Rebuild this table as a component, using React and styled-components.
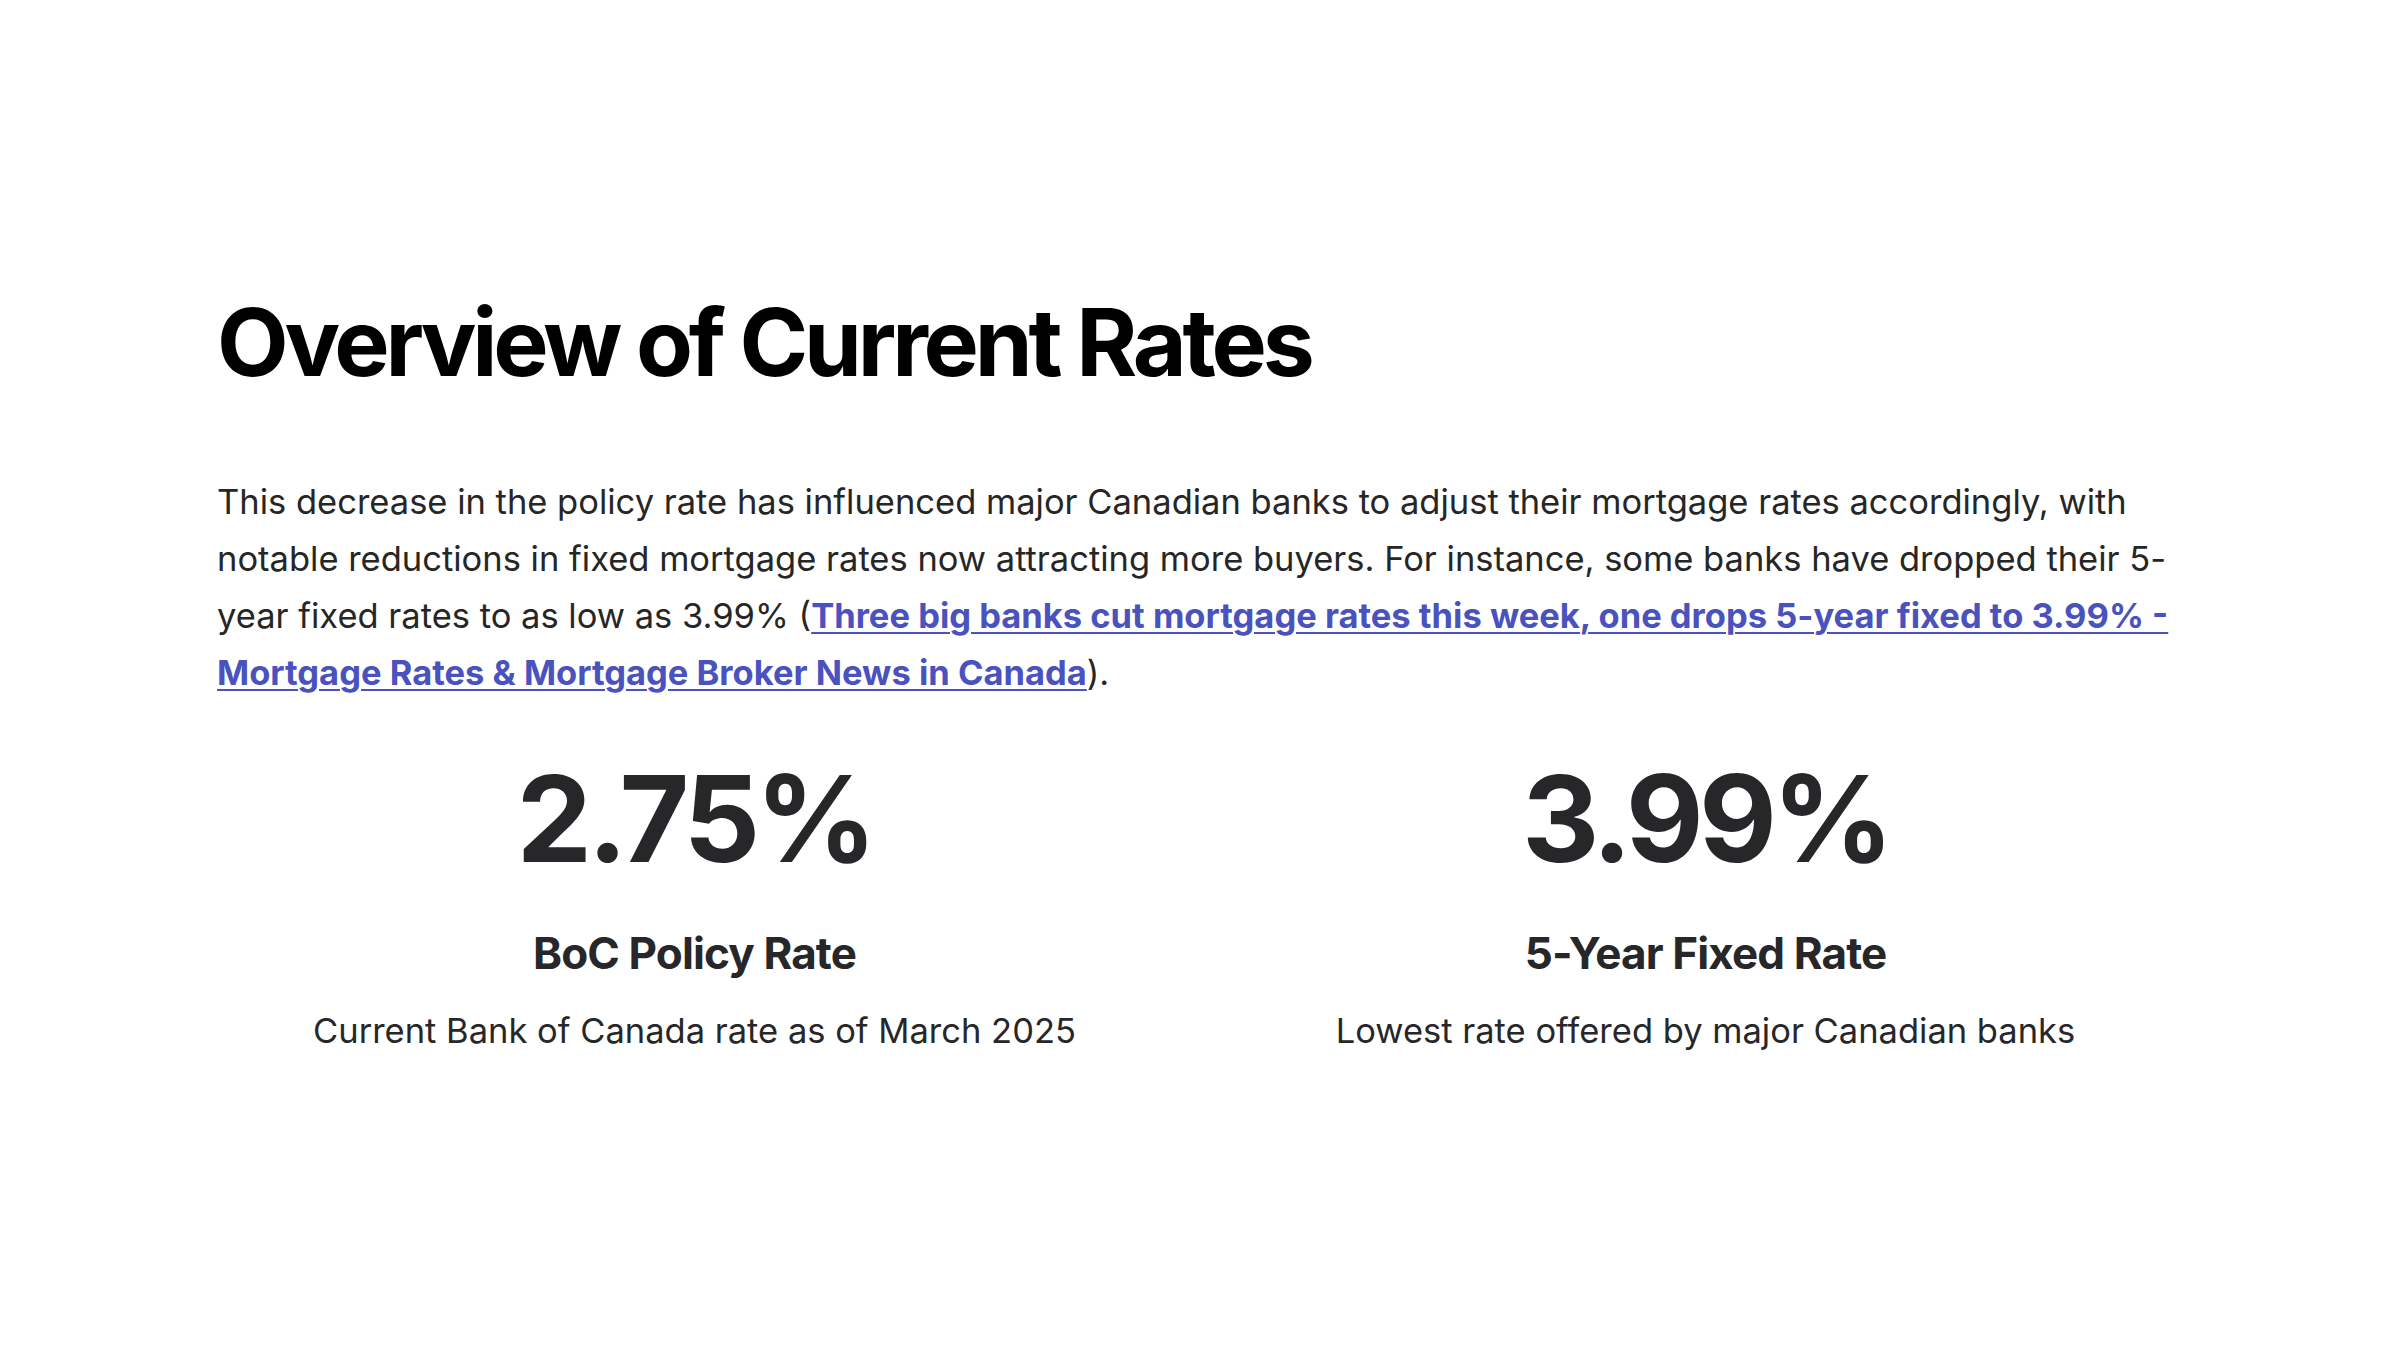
import React from "react";
import styled, { createGlobalStyle } from "styled-components";

const GlobalStyle = createGlobalStyle`
  html, body {
    margin: 0;
    padding: 0;
    background: #ffffff;
  }
  body {
    font-family: Inter, "Noto Sans", "Liberation Sans", sans-serif;
    -webkit-font-smoothing: antialiased;
  }
`;

const Page = styled.main`
  box-sizing: border-box;
  width: 2400px;
  height: 1350px;
  padding: 287px 217px 0;
  display: flex;
  flex-direction: column;
`;

const Title = styled.h1`
  margin: 0;
  font-size: 93px;
  line-height: 1.2;
  font-weight: 700;
  letter-spacing: -0.045em;
  color: #000;
`;

const Body = styled.p`
  margin: 74px 0 0;
  font-size: 34.5px;
  line-height: 57px;
  font-weight: 400;
  color: #262626;
`;

const Link = styled.a`
  color: #4a52be;
  font-weight: 650;
  text-decoration: underline;
  text-underline-offset: 4px;
  text-decoration-thickness: 2px;
`;

const Stats = styled.section`
  margin-top: 58px;
  display: grid;
  grid-template-columns: 1fr 1fr;
  column-gap: 56px;
`;

const Stat = styled.div`
  display: flex;
  flex-direction: column;
  align-items: center;
  text-align: center;
`;

const Value = styled.div`
  font-size: 120px;
  line-height: 120px;
  font-weight: 700;
  letter-spacing: -0.04em;
  color: #27272a;
`;

const Label = styled.h3`
  margin: 46px 0 0;
  font-size: 44px;
  line-height: 57px;
  font-weight: 700;
  letter-spacing: -0.02em;
  color: #27272a;
`;

const Caption = styled.p`
  margin: 25px 0 0;
  font-size: 34.5px;
  line-height: 48px;
  color: #27272a;
`;

const stats = [
  { value: "2.75%", label: "BoC Policy Rate", caption: "Current Bank of Canada rate as of March 2025" },
  { value: "3.99%", label: "5-Year Fixed Rate", caption: "Lowest rate offered by major Canadian banks" },
];

export default function App() {
  return (
    <>
      <GlobalStyle />
      <Page>
        <Title>Overview of Current Rates</Title>
        <Body>
          This decrease in the policy rate has influenced major Canadian banks to adjust their
          mortgage rates accordingly, with notable reductions in fixed mortgage rates now
          attracting more buyers. For instance, some banks have dropped their 5-year fixed rates
          to as low as 3.99% (
          <Link href="#">
            Three big banks cut mortgage rates this week, one drops 5-year fixed to 3.99% -
            Mortgage Rates &amp; Mortgage Broker News in Canada
          </Link>
          ).
        </Body>
        <Stats>
          {stats.map((s) => (
            <Stat key={s.label}>
              <Value>{s.value}</Value>
              <Label>{s.label}</Label>
              <Caption>{s.caption}</Caption>
            </Stat>
          ))}
        </Stats>
      </Page>
    </>
  );
}
